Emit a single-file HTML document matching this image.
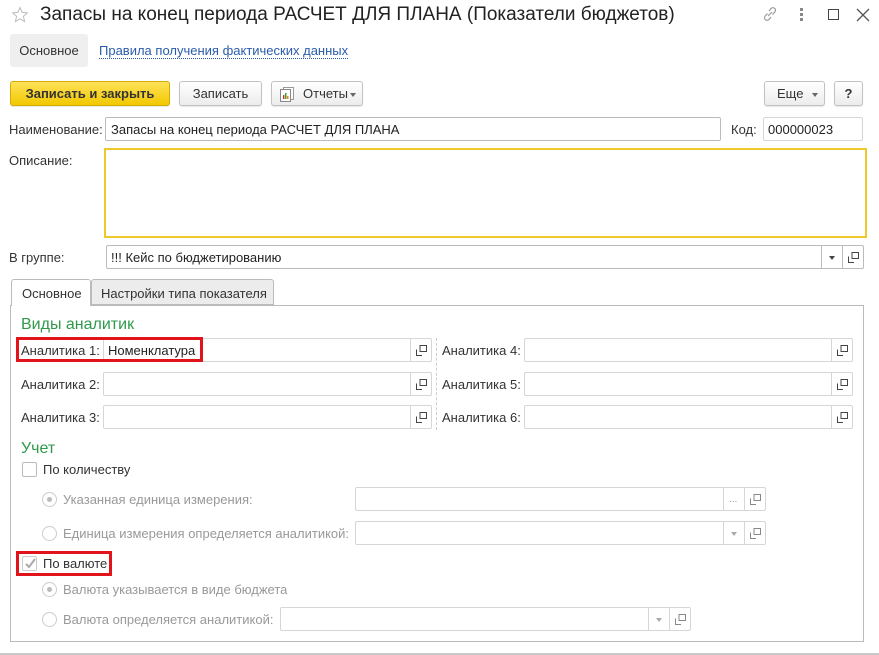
<!DOCTYPE html>
<html><head><meta charset="utf-8"><style>
*{box-sizing:border-box;margin:0;padding:0}
body{width:879px;height:655px;background:#fff;font-family:"Liberation Sans",Arial,sans-serif;font-size:13px;color:#333;position:relative;overflow:hidden}
.a{position:absolute;white-space:nowrap}
.inp{position:absolute;border:1px solid #bbb;border-radius:2px;background:#fff;height:24px}
.inp.l{border-color:#d6d6d6}
.btn{position:absolute;border:1px solid #c2c2c2;border-radius:3px;background:linear-gradient(#fff,#ececec);height:25px;text-align:center;line-height:23px;box-shadow:0 1px 1px rgba(0,0,0,.1)}
.sb{position:absolute;top:0;bottom:0;border-left:1px solid #d6d6d6;width:21px}
.sb svg{position:absolute;left:5px;top:6px}
.dd{position:absolute;left:7px;top:10px;width:0;height:0;border-left:3.5px solid transparent;border-right:3.5px solid transparent;border-top:4px solid #666}
.g{color:#999}
.green{color:#2e9a4a;font-size:16px}
.red{position:absolute;border:3px solid #e0141a}
.rad{position:absolute;width:15px;height:15px;border:1px solid #ccc;border-radius:50%;background:#fff}
.rad.on::after{content:"";position:absolute;left:4px;top:4px;width:5px;height:5px;border-radius:50%;background:#bbb}
</style></head><body>
<svg class="a" style="left:11px;top:6px" width="18" height="18" viewBox="0 0 18 18"><path d="M9 1.5L11.2 6.4 16.3 6.9 12.4 10.3 13.6 15.5 9 12.8 4.4 15.5 5.6 10.3 1.7 6.9 6.8 6.4Z" fill="none" stroke="#bbb" stroke-width="1"/></svg>
<div class="a" style="left:40px;top:4px;font-size:19px;color:#222">Запасы на конец периода РАСЧЕТ ДЛЯ ПЛАНА (Показатели бюджетов)</div>
<svg class="a" style="left:761px;top:5px" width="18" height="18" viewBox="0 0 18 18"><path d="M8 6l2-2.5a2.5 2.5 0 0 1 3.8 3.5l-2.3 2.5M10 12l-2 2.5a2.5 2.5 0 0 1-3.8-3.5l2.3-2.5M7 11l4-4" fill="none" stroke="#999" stroke-width="1.2"/></svg>
<div class="a" style="left:800px;top:8px;width:3px;height:3px;background:#888;box-shadow:0 5px 0 #888,0 10px 0 #888"></div>
<div class="a" style="left:828px;top:9px;width:11px;height:11px;border:1.5px solid #444"></div>
<svg class="a" style="left:856px;top:8px" width="14" height="14" viewBox="0 0 14 14"><path d="M1 1L13 13M13 1L1 13" stroke="#555" stroke-width="1.3"/></svg>

<div class="a" style="left:10px;top:34px;width:78px;height:33px;background:#efefef;border-radius:3px;line-height:33px;text-align:center;color:#333">Основное</div>
<div class="a" style="left:99px;top:43px;color:#2a5caa;border-bottom:1px dotted #2a5caa;line-height:15px">Правила получения фактических данных</div>

<div class="btn" style="left:10px;top:81px;width:160px;background:linear-gradient(#ffe25a,#f2c800);border-color:#d4ad00;font-weight:bold;color:#333">Записать и закрыть</div>
<div class="btn" style="left:179px;top:81px;width:83px">Записать</div>
<div class="btn" style="left:271px;top:81px;width:92px;text-align:left;padding-left:31px">Отчеты
<span style="position:absolute;left:78px;top:11px;border-left:3.5px solid transparent;border-right:3.5px solid transparent;border-top:4px solid #666"></span>
<svg style="position:absolute;left:7px;top:5px" width="16" height="15" viewBox="0 0 16 15"><rect x="4.5" y="0.5" width="10" height="12" fill="#fff" stroke="#999"/><rect x="1.5" y="2.5" width="10" height="12" fill="#fff" stroke="#888"/><rect x="4" y="8" width="1.5" height="4" fill="#d33"/><rect x="6" y="6" width="1.5" height="6" fill="#3a3"/><rect x="8" y="9" width="1.5" height="3" fill="#e80"/></svg></div>
<div class="btn" style="left:764px;top:81px;width:61px;text-align:left;padding-left:12px">Еще<span style="position:absolute;left:47px;top:11px;border-left:3.5px solid transparent;border-right:3.5px solid transparent;border-top:4px solid #666"></span></div>
<div class="btn" style="left:834px;top:81px;width:29px;font-weight:bold">?</div>

<div class="a" style="left:9px;top:122px">Наименование:</div>
<div class="inp" style="left:105px;top:117px;width:616px;padding:4px 5px;color:#222">Запасы на конец периода РАСЧЕТ ДЛЯ ПЛАНА</div>
<div class="a" style="left:731px;top:122px">Код:</div>
<div class="inp l" style="left:763px;top:117px;width:100px;padding:4px 4px;color:#222">000000023</div>

<div class="a" style="left:9px;top:153px">Описание:</div>
<div class="a" style="left:104px;top:148px;width:763px;height:90px;border:2px solid #f0c82a"></div>

<div class="a" style="left:9px;top:250px">В группе:</div>
<div class="inp" style="left:106px;top:245px;width:758px;padding:4px 4px;color:#222">!!! Кейс по бюджетированию
<div class="sb" style="left:714px;border-color:#bbb"><span class="dd" style="border-top-color:#444"></span></div>
<div class="sb" style="left:735px;border-color:#bbb"><svg width="11" height="11" viewBox="0 0 11 11"><path d="M4 0.5H10.5V6.5H4Z M0.5 4.5V10.5H6" fill="none" stroke="#444"/></svg></div></div>

<div class="a" style="left:10px;top:305px;width:854px;height:337px;border:1px solid #bbb"></div>
<div class="a" style="left:11px;top:279px;width:80px;height:27px;border:1px solid #bbb;border-bottom:none;background:#fff;border-radius:3px 3px 0 0;padding:6px 0 0 10px">Основное</div>
<div class="a" style="left:91px;top:279px;width:183px;height:26px;border:1px solid #bbb;background:#ececec;border-radius:3px 3px 0 0;padding:6px 0 0 9px">Настройки типа показателя</div>

<div class="a green" style="left:21px;top:316px">Виды аналитик</div>
<div class="a" style="left:436px;top:338px;height:92px;border-left:1px dashed #ccc"></div>

<div class="a" style="left:21px;top:343px">Аналитика 1:</div>
<div class="a" style="left:21px;top:377px">Аналитика 2:</div>
<div class="a" style="left:21px;top:410px">Аналитика 3:</div>
<div class="a" style="left:442px;top:343px">Аналитика 4:</div>
<div class="a" style="left:442px;top:377px">Аналитика 5:</div>
<div class="a" style="left:442px;top:410px">Аналитика 6:</div>

<div class="inp l" style="left:103px;top:338px;width:329px;padding:4px 4px;color:#222">Номенклатура<div class="sb" style="left:306px"><svg width="11" height="11" viewBox="0 0 11 11"><path d="M4 0.5H10.5V6.5H4Z M0.5 4.5V10.5H6" fill="none" stroke="#444"/></svg></div></div>
<div class="inp l" style="left:103px;top:372px;width:329px"><div class="sb" style="left:306px"><svg width="11" height="11" viewBox="0 0 11 11"><path d="M4 0.5H10.5V6.5H4Z M0.5 4.5V10.5H6" fill="none" stroke="#444"/></svg></div></div>
<div class="inp l" style="left:103px;top:405px;width:329px"><div class="sb" style="left:306px"><svg width="11" height="11" viewBox="0 0 11 11"><path d="M4 0.5H10.5V6.5H4Z M0.5 4.5V10.5H6" fill="none" stroke="#444"/></svg></div></div>
<div class="inp l" style="left:524px;top:338px;width:329px"><div class="sb" style="left:306px"><svg width="11" height="11" viewBox="0 0 11 11"><path d="M4 0.5H10.5V6.5H4Z M0.5 4.5V10.5H6" fill="none" stroke="#444"/></svg></div></div>
<div class="inp l" style="left:524px;top:372px;width:329px"><div class="sb" style="left:306px"><svg width="11" height="11" viewBox="0 0 11 11"><path d="M4 0.5H10.5V6.5H4Z M0.5 4.5V10.5H6" fill="none" stroke="#444"/></svg></div></div>
<div class="inp l" style="left:524px;top:405px;width:329px"><div class="sb" style="left:306px"><svg width="11" height="11" viewBox="0 0 11 11"><path d="M4 0.5H10.5V6.5H4Z M0.5 4.5V10.5H6" fill="none" stroke="#444"/></svg></div></div>
<div class="red" style="left:16px;top:337px;width:187px;height:25px"></div>

<div class="a green" style="left:21px;top:440px">Учет</div>
<div class="a" style="left:22px;top:462px;width:15px;height:15px;border:1px solid #bbb;border-radius:2px"></div>
<div class="a" style="left:43px;top:462px">По количеству</div>

<div class="rad on" style="left:42px;top:492px"></div>
<div class="a g" style="left:63px;top:492px">Указанная единица измерения:</div>
<div class="inp l" style="left:355px;top:487px;width:411px"><div class="sb" style="left:367px;color:#999;font-size:10px;padding:6px 0 0 5px">...</div><div class="sb" style="left:388px"><svg width="11" height="11" viewBox="0 0 11 11"><path d="M4 0.5H10.5V6.5H4Z M0.5 4.5V10.5H6" fill="none" stroke="#888"/></svg></div></div>
<div class="rad" style="left:42px;top:526px"></div>
<div class="a g" style="left:63px;top:526px">Единица измерения определяется аналитикой:</div>
<div class="inp l" style="left:355px;top:521px;width:411px"><div class="sb" style="left:367px"><span class="dd" style="border-top-color:#aaa"></span></div><div class="sb" style="left:388px"><svg width="11" height="11" viewBox="0 0 11 11"><path d="M4 0.5H10.5V6.5H4Z M0.5 4.5V10.5H6" fill="none" stroke="#888"/></svg></div></div>

<div class="a" style="left:22px;top:556px;width:15px;height:15px;border:1px solid #ccc;border-radius:2px"><svg style="position:absolute;left:1px;top:0" width="13" height="13" viewBox="0 0 13 13"><path d="M2 7L5 10 11 2" fill="none" stroke="#aaa" stroke-width="2"/></svg></div>
<div class="a" style="left:43px;top:556px">По валюте</div>
<div class="red" style="left:16px;top:551px;width:96px;height:25px"></div>

<div class="rad on" style="left:42px;top:582px"></div>
<div class="a g" style="left:63px;top:582px">Валюта указывается в виде бюджета</div>
<div class="rad" style="left:42px;top:612px"></div>
<div class="a g" style="left:63px;top:612px">Валюта определяется аналитикой:</div>
<div class="inp l" style="left:280px;top:607px;width:411px"><div class="sb" style="left:367px"><span class="dd" style="border-top-color:#aaa"></span></div><div class="sb" style="left:388px"><svg width="11" height="11" viewBox="0 0 11 11"><path d="M4 0.5H10.5V6.5H4Z M0.5 4.5V10.5H6" fill="none" stroke="#888"/></svg></div></div>

<div class="a" style="left:0;top:653px;width:879px;height:2px;background:#c8c8c8"></div>
</body></html>
